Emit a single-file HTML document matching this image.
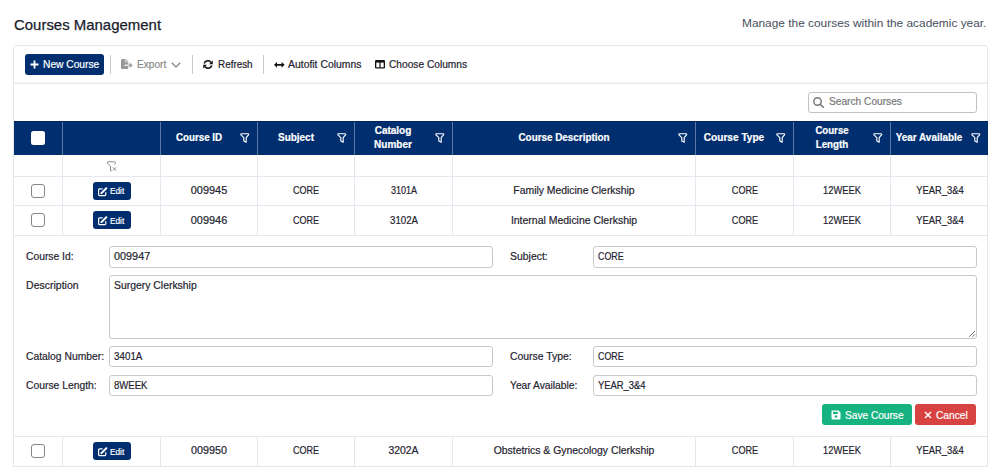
<!DOCTYPE html>
<html><head><meta charset="utf-8">
<style>
*{box-sizing:border-box;margin:0;padding:0}
html,body{width:996px;height:467px;overflow:hidden;background:#fff}
body{position:relative;font-family:"Liberation Sans",sans-serif;color:#1f2430}
.a{-webkit-text-stroke:0.2px currentColor}
.a{position:absolute;white-space:nowrap}
#card{left:13px;top:45px;width:975px;height:440px;border:1px solid #e3e7ee;border-radius:3px}
.btnp{background:#002e6f;color:#fff;border-radius:3px}
.sep{width:1px;height:19px;background:#c9cbd0;top:55px}
#search{left:808px;top:92px;width:169px;height:21px;border:1px solid #c0c2c6;border-radius:3px}
#hdr{left:14px;top:121px;width:974px;height:34px;background:#002e6f;border-top:1px solid #00205f}
.vl{width:1px;background:#e3e8f0}
.hvl{width:1px;background:#5c77a3}
.hl{height:1px;background:#e3e8f0}
.cb{width:14px;height:14px;border:1.6px solid #868686;border-radius:3px;background:#fff}
.edit{width:38px;height:18px;background:#002e6f;border-radius:3px}
.inp{border:1px solid #c9c9c9;border-radius:3px}
</style></head><body>
<div class="a" style="top:15.87px;font-size:14.8px;line-height:18px;color:#181c2b;left:13.80px;transform:scaleX(1.010);transform-origin:left;-webkit-text-stroke:0.25px #181c2b">Courses Management</div>
<div class="a" style="top:16.08px;font-size:11.3px;line-height:14px;color:#4d5462;left:741.80px;transform:scaleX(1.052);transform-origin:left;-webkit-text-stroke:0.05px #4d5462">Manage the courses within the academic year.</div>
<div id="card" class="a"></div>
<div class="a" style="left:14px;top:82px;width:973px;height:1px;background:#f1f3f7"></div>
<div class="a" style="left:14px;top:83px;width:973px;height:1px;background:#e5e9f0"></div>
<div class="a btnp" style="left:25px;top:54px;width:79px;height:21px"></div>
<svg class="a" style="left:30px;top:60px" width="9" height="9" viewBox="0 0 9 9"><path d="M4.5 0.5V8.5M0.5 4.5H8.5" stroke="#fff" stroke-width="1.8"/></svg>
<div class="a" style="top:59.13px;font-size:10.3px;line-height:12px;color:#fff;left:43.00px;transform:scaleX(0.993);transform-origin:left">New Course</div>
<div class="a sep" style="left:110px"></div>
<svg class="a" style="left:121px;top:59px" width="12" height="10" viewBox="0 0 12 10"><path d="M1 0H4.6L7.3 2.7V9.1Q7.3 10 6.4 10H1Q0 10 0 9.1V0.9Q0 0 1 0Z" fill="#999"/><path d="M4.3 0.6V2.2Q4.3 3 5.1 3H6.8" stroke="#fff" stroke-width="0.7" fill="none"/><rect x="3.6" y="5.6" width="4.2" height="1.2" fill="#fff"/><rect x="7.4" y="5.6" width="1.8" height="1.2" fill="#999"/><path d="M8.7 3.4L11.6 6.2L8.7 9Z" fill="#999"/></svg>
<div class="a" style="top:59.13px;font-size:10.3px;line-height:12px;color:#8a8a8a;left:136.60px;transform:scaleX(0.981);transform-origin:left">Export</div>
<svg class="a" style="left:171px;top:61.6px" width="10" height="6" viewBox="0 0 10 6"><path d="M0.8 0.8L5 5L9.2 0.8" stroke="#8a8a8a" stroke-width="1.35" fill="none"/></svg>
<div class="a sep" style="left:192px"></div>
<svg class="a" style="left:203px;top:59.8px" width="10" height="9" viewBox="0 0 10 9"><path d="M1.2 3.4A3.9 3.9 0 0 1 7.9 2.2" stroke="#111" stroke-width="1.6" fill="none"/><path d="M9.8 0.4V4.2H6Z" fill="#111"/><path d="M8.8 5.6A3.9 3.9 0 0 1 2.1 6.8" stroke="#111" stroke-width="1.6" fill="none"/><path d="M0.2 8.6V4.8H4Z" fill="#111"/></svg>
<div class="a" style="top:59.13px;font-size:10.3px;line-height:12px;color:#1f2430;left:217.60px;transform:scaleX(0.960);transform-origin:left">Refresh</div>
<div class="a sep" style="left:263px"></div>
<svg class="a" style="left:274px;top:61.7px" width="11" height="6" viewBox="0 0 11 6"><rect x="2.4" y="1.95" width="5.8" height="1.8" fill="#111"/><path d="M0 2.85L3 0V5.7ZM10.6 2.85L7.6 0V5.7Z" fill="#111"/></svg>
<div class="a" style="top:59.13px;font-size:10.3px;line-height:12px;color:#1f2430;left:288.40px;transform:scaleX(1.011);transform-origin:left">Autofit Columns</div>
<svg class="a" style="left:375px;top:59.8px" width="10" height="9" viewBox="0 0 10 9"><rect x="0" y="0" width="10" height="8.6" rx="1.3" fill="#111"/><rect x="1.3" y="2.6" width="3.1" height="4.7" fill="#fff"/><rect x="5.6" y="2.6" width="3.1" height="4.7" fill="#fff"/></svg>
<div class="a" style="top:59.13px;font-size:10.3px;line-height:12px;color:#1f2430;left:389.10px;transform:scaleX(0.989);transform-origin:left">Choose Columns</div>
<div id="search" class="a"></div>
<svg class="a" style="left:813px;top:96.8px" width="11" height="11" viewBox="0 0 11 11"><circle cx="4.5" cy="4.5" r="3.7" stroke="#777" stroke-width="1.45" fill="none"/><path d="M7.2 7.3L10.3 10.3" stroke="#777" stroke-width="1.6" stroke-linecap="round"/></svg>
<div class="a" style="top:96.43px;font-size:10.3px;line-height:12px;color:#777;left:829.00px;transform:scaleX(0.988);transform-origin:left">Search Courses</div>
<div id="hdr" class="a"></div>
<div class="a hvl" style="left:62px;top:122px;height:33px"></div>
<div class="a hvl" style="left:160px;top:122px;height:33px"></div>
<div class="a hvl" style="left:257px;top:122px;height:33px"></div>
<div class="a hvl" style="left:354px;top:122px;height:33px"></div>
<div class="a hvl" style="left:452px;top:122px;height:33px"></div>
<div class="a hvl" style="left:695px;top:122px;height:33px"></div>
<div class="a hvl" style="left:793px;top:122px;height:33px"></div>
<div class="a hvl" style="left:890px;top:122px;height:33px"></div>
<div class="a" style="top:131.53px;font-size:10px;line-height:12px;color:#fff;font-weight:bold;left:-1.50px;width:400px;text-align:center;transform:scaleX(0.978);transform-origin:center">Course ID</div>
<svg class="a" style="left:240.1px;top:133px" width="10" height="10" viewBox="0 0 10 10"><path d="M1.5 0.7H7.9Q9.2 0.7 8.5 1.9L6.2 4.6V9.2L3.8 8V4.6L1 1.9Q0.3 0.7 1.5 0.7Z" stroke="#fff" stroke-width="1.15" fill="none" stroke-linejoin="round"/></svg>
<div class="a" style="top:131.53px;font-size:10px;line-height:12px;color:#fff;font-weight:bold;left:95.50px;width:400px;text-align:center;transform:scaleX(0.994);transform-origin:center">Subject</div>
<svg class="a" style="left:337.1px;top:133px" width="10" height="10" viewBox="0 0 10 10"><path d="M1.5 0.7H7.9Q9.2 0.7 8.5 1.9L6.2 4.6V9.2L3.8 8V4.6L1 1.9Q0.3 0.7 1.5 0.7Z" stroke="#fff" stroke-width="1.15" fill="none" stroke-linejoin="round"/></svg>
<div class="a" style="top:125.03px;font-size:10px;line-height:12px;color:#fff;font-weight:bold;left:193.00px;width:400px;text-align:center">Catalog</div>
<div class="a" style="top:138.53px;font-size:10px;line-height:12px;color:#fff;font-weight:bold;left:193.00px;width:400px;text-align:center">Number</div>
<svg class="a" style="left:435.1px;top:133px" width="10" height="10" viewBox="0 0 10 10"><path d="M1.5 0.7H7.9Q9.2 0.7 8.5 1.9L6.2 4.6V9.2L3.8 8V4.6L1 1.9Q0.3 0.7 1.5 0.7Z" stroke="#fff" stroke-width="1.15" fill="none" stroke-linejoin="round"/></svg>
<div class="a" style="top:131.53px;font-size:10px;line-height:12px;color:#fff;font-weight:bold;left:363.50px;width:400px;text-align:center;transform:scaleX(0.987);transform-origin:center">Course Description</div>
<svg class="a" style="left:678.1px;top:133px" width="10" height="10" viewBox="0 0 10 10"><path d="M1.5 0.7H7.9Q9.2 0.7 8.5 1.9L6.2 4.6V9.2L3.8 8V4.6L1 1.9Q0.3 0.7 1.5 0.7Z" stroke="#fff" stroke-width="1.15" fill="none" stroke-linejoin="round"/></svg>
<div class="a" style="top:131.53px;font-size:10px;line-height:12px;color:#fff;font-weight:bold;left:534.00px;width:400px;text-align:center;transform:scaleX(1.010);transform-origin:center">Course Type</div>
<svg class="a" style="left:776.1px;top:133px" width="10" height="10" viewBox="0 0 10 10"><path d="M1.5 0.7H7.9Q9.2 0.7 8.5 1.9L6.2 4.6V9.2L3.8 8V4.6L1 1.9Q0.3 0.7 1.5 0.7Z" stroke="#fff" stroke-width="1.15" fill="none" stroke-linejoin="round"/></svg>
<div class="a" style="top:125.03px;font-size:10px;line-height:12px;color:#fff;font-weight:bold;left:631.50px;width:400px;text-align:center;transform:scaleX(0.964);transform-origin:center">Course</div>
<div class="a" style="top:138.53px;font-size:10px;line-height:12px;color:#fff;font-weight:bold;left:631.50px;width:400px;text-align:center;transform:scaleX(0.978);transform-origin:center">Length</div>
<svg class="a" style="left:873.1px;top:133px" width="10" height="10" viewBox="0 0 10 10"><path d="M1.5 0.7H7.9Q9.2 0.7 8.5 1.9L6.2 4.6V9.2L3.8 8V4.6L1 1.9Q0.3 0.7 1.5 0.7Z" stroke="#fff" stroke-width="1.15" fill="none" stroke-linejoin="round"/></svg>
<div class="a" style="top:131.53px;font-size:10px;line-height:12px;color:#fff;font-weight:bold;left:729.00px;width:400px;text-align:center;transform:scaleX(0.991);transform-origin:center">Year Available</div>
<svg class="a" style="left:971.1px;top:133px" width="10" height="10" viewBox="0 0 10 10"><path d="M1.5 0.7H7.9Q9.2 0.7 8.5 1.9L6.2 4.6V9.2L3.8 8V4.6L1 1.9Q0.3 0.7 1.5 0.7Z" stroke="#fff" stroke-width="1.15" fill="none" stroke-linejoin="round"/></svg>
<div class="a" style="left:31px;top:131px;width:14px;height:14px;background:#fff;border-radius:2.5px"></div>
<div class="a vl" style="left:62px;top:155px;height:80px"></div>
<div class="a vl" style="left:62px;top:437px;height:30px"></div>
<div class="a vl" style="left:160px;top:155px;height:80px"></div>
<div class="a vl" style="left:160px;top:437px;height:30px"></div>
<div class="a vl" style="left:257px;top:155px;height:80px"></div>
<div class="a vl" style="left:257px;top:437px;height:30px"></div>
<div class="a vl" style="left:354px;top:155px;height:80px"></div>
<div class="a vl" style="left:354px;top:437px;height:30px"></div>
<div class="a vl" style="left:452px;top:155px;height:80px"></div>
<div class="a vl" style="left:452px;top:437px;height:30px"></div>
<div class="a vl" style="left:695px;top:155px;height:80px"></div>
<div class="a vl" style="left:695px;top:437px;height:30px"></div>
<div class="a vl" style="left:793px;top:155px;height:80px"></div>
<div class="a vl" style="left:793px;top:437px;height:30px"></div>
<div class="a vl" style="left:890px;top:155px;height:80px"></div>
<div class="a vl" style="left:890px;top:437px;height:30px"></div>
<div class="a hl" style="left:14px;top:176px;width:973px"></div>
<div class="a hl" style="left:14px;top:205px;width:973px"></div>
<div class="a hl" style="left:14px;top:235px;width:973px"></div>
<div class="a hl" style="left:14px;top:436px;width:973px"></div>
<div class="a hl" style="left:14px;top:466px;width:973px"></div>
<svg class="a" style="left:103px;top:157.5px" width="18" height="18" viewBox="0 0 18 18"><path d="M11.3 6.7Q12.9 5.5 12.5 4.5Q12.2 3.8 11.2 3.8H5.3Q4 3.8 4.4 4.9Q4.8 5.8 7.5 8.2V12.7H8.7" stroke="#8a8a8a" stroke-width="1" fill="none"/><path d="M10 9.3L13.1 12.5M13.1 9.3L10 12.5" stroke="#8a8a8a" stroke-width="1"/></svg>
<div class="a cb" style="left:31px;top:184px"></div>
<div class="a edit" style="left:93px;top:182px"></div>
<svg class="a" style="left:98.3px;top:186.5px" width="10" height="10" viewBox="0 0 10 10"><path d="M4.6 1.8H1.6Q0.6 1.8 0.6 2.8V7.6Q0.6 8.6 1.6 8.6H6.8Q7.8 8.6 7.8 7.6V5.3" stroke="#fff" stroke-width="1.2" fill="none"/><path d="M3.5 6.1L8.3 1.3" stroke="#fff" stroke-width="2" stroke-linecap="round"/><path d="M2.7 7L3 5.3L4.3 6.6Z" fill="#fff"/></svg>
<div class="a" style="top:185.20px;font-size:9.8px;line-height:12px;color:#fff;left:110.30px;transform:scaleX(0.841);transform-origin:left">Edit</div>
<div class="a" style="top:184.70px;font-size:10.4px;line-height:12px;color:#1f2430;left:9.00px;width:400px;text-align:center;transform:scaleX(1.052);transform-origin:center">009945</div>
<div class="a" style="top:184.70px;font-size:10.4px;line-height:12px;color:#1f2430;left:106.00px;width:400px;text-align:center;transform:scaleX(0.872);transform-origin:center">CORE</div>
<div class="a" style="top:184.70px;font-size:10.4px;line-height:12px;color:#1f2430;left:203.50px;width:400px;text-align:center;transform:scaleX(0.864);transform-origin:center">3101A</div>
<div class="a" style="top:184.70px;font-size:10.4px;line-height:12px;color:#1f2430;left:374.00px;width:400px;text-align:center">Family Medicine Clerkship</div>
<div class="a" style="top:184.70px;font-size:10.4px;line-height:12px;color:#1f2430;left:544.50px;width:400px;text-align:center;transform:scaleX(0.875);transform-origin:center">CORE</div>
<div class="a" style="top:184.70px;font-size:10.4px;line-height:12px;color:#1f2430;left:642.00px;width:400px;text-align:center;transform:scaleX(0.898);transform-origin:center">12WEEK</div>
<div class="a" style="top:184.70px;font-size:10.4px;line-height:12px;color:#1f2430;left:739.50px;width:400px;text-align:center;transform:scaleX(0.903);transform-origin:center">YEAR_3&amp;4</div>
<div class="a cb" style="left:31px;top:213px"></div>
<div class="a edit" style="left:93px;top:211px"></div>
<svg class="a" style="left:98.3px;top:215.5px" width="10" height="10" viewBox="0 0 10 10"><path d="M4.6 1.8H1.6Q0.6 1.8 0.6 2.8V7.6Q0.6 8.6 1.6 8.6H6.8Q7.8 8.6 7.8 7.6V5.3" stroke="#fff" stroke-width="1.2" fill="none"/><path d="M3.5 6.1L8.3 1.3" stroke="#fff" stroke-width="2" stroke-linecap="round"/><path d="M2.7 7L3 5.3L4.3 6.6Z" fill="#fff"/></svg>
<div class="a" style="top:215.10px;font-size:9.8px;line-height:12px;color:#fff;left:110.30px;transform:scaleX(0.841);transform-origin:left">Edit</div>
<div class="a" style="top:214.60px;font-size:10.4px;line-height:12px;color:#1f2430;left:9.00px;width:400px;text-align:center;transform:scaleX(1.052);transform-origin:center">009946</div>
<div class="a" style="top:214.60px;font-size:10.4px;line-height:12px;color:#1f2430;left:106.00px;width:400px;text-align:center;transform:scaleX(0.872);transform-origin:center">CORE</div>
<div class="a" style="top:214.60px;font-size:10.4px;line-height:12px;color:#1f2430;left:203.50px;width:400px;text-align:center;transform:scaleX(0.931);transform-origin:center">3102A</div>
<div class="a" style="top:214.60px;font-size:10.4px;line-height:12px;color:#1f2430;left:374.00px;width:400px;text-align:center;transform:scaleX(1.007);transform-origin:center">Internal Medicine Clerkship</div>
<div class="a" style="top:214.60px;font-size:10.4px;line-height:12px;color:#1f2430;left:544.50px;width:400px;text-align:center;transform:scaleX(0.875);transform-origin:center">CORE</div>
<div class="a" style="top:214.60px;font-size:10.4px;line-height:12px;color:#1f2430;left:642.00px;width:400px;text-align:center;transform:scaleX(0.898);transform-origin:center">12WEEK</div>
<div class="a" style="top:214.60px;font-size:10.4px;line-height:12px;color:#1f2430;left:739.50px;width:400px;text-align:center;transform:scaleX(0.903);transform-origin:center">YEAR_3&amp;4</div>
<div class="a cb" style="left:31px;top:444px"></div>
<div class="a edit" style="left:93px;top:442px"></div>
<svg class="a" style="left:98.3px;top:446.5px" width="10" height="10" viewBox="0 0 10 10"><path d="M4.6 1.8H1.6Q0.6 1.8 0.6 2.8V7.6Q0.6 8.6 1.6 8.6H6.8Q7.8 8.6 7.8 7.6V5.3" stroke="#fff" stroke-width="1.2" fill="none"/><path d="M3.5 6.1L8.3 1.3" stroke="#fff" stroke-width="2" stroke-linecap="round"/><path d="M2.7 7L3 5.3L4.3 6.6Z" fill="#fff"/></svg>
<div class="a" style="top:445.70px;font-size:9.8px;line-height:12px;color:#fff;left:110.30px;transform:scaleX(0.841);transform-origin:left">Edit</div>
<div class="a" style="top:445.20px;font-size:10.4px;line-height:12px;color:#1f2430;left:9.00px;width:400px;text-align:center;transform:scaleX(1.037);transform-origin:center">009950</div>
<div class="a" style="top:445.20px;font-size:10.4px;line-height:12px;color:#1f2430;left:106.00px;width:400px;text-align:center;transform:scaleX(0.872);transform-origin:center">CORE</div>
<div class="a" style="top:445.20px;font-size:10.4px;line-height:12px;color:#1f2430;left:203.50px;width:400px;text-align:center">3202A</div>
<div class="a" style="top:445.20px;font-size:10.4px;line-height:12px;color:#1f2430;left:374.00px;width:400px;text-align:center">Obstetrics &amp; Gynecology Clerkship</div>
<div class="a" style="top:445.20px;font-size:10.4px;line-height:12px;color:#1f2430;left:544.50px;width:400px;text-align:center;transform:scaleX(0.875);transform-origin:center">CORE</div>
<div class="a" style="top:445.20px;font-size:10.4px;line-height:12px;color:#1f2430;left:642.00px;width:400px;text-align:center;transform:scaleX(0.898);transform-origin:center">12WEEK</div>
<div class="a" style="top:445.20px;font-size:10.4px;line-height:12px;color:#1f2430;left:739.50px;width:400px;text-align:center;transform:scaleX(0.903);transform-origin:center">YEAR_3&amp;4</div>
<div class="a" style="top:250.26px;font-size:10.5px;line-height:13px;color:#1f2430;left:25.70px;transform:scaleX(0.981);transform-origin:left">Course Id:</div>
<div class="a inp" style="left:109px;top:246px;width:384px;height:22px"></div>
<div class="a" style="top:250.06px;font-size:10.5px;line-height:13px;color:#1f2430;left:114.20px;transform:scaleX(1.033);transform-origin:left">009947</div>
<div class="a" style="top:250.26px;font-size:10.5px;line-height:13px;color:#1f2430;left:509.80px;transform:scaleX(0.994);transform-origin:left">Subject:</div>
<div class="a inp" style="left:593px;top:246px;width:384px;height:22px"></div>
<div class="a" style="top:250.06px;font-size:10.5px;line-height:13px;color:#1f2430;left:598.20px;transform:scaleX(0.847);transform-origin:left">CORE</div>
<div class="a" style="top:278.86px;font-size:10.5px;line-height:13px;color:#1f2430;left:26.10px">Description</div>
<div class="a inp" style="left:109px;top:275px;width:868px;height:64px"></div>
<div class="a" style="top:279.06px;font-size:10.5px;line-height:13px;color:#1f2430;left:114.20px;transform:scaleX(0.991);transform-origin:left">Surgery Clerkship</div>
<svg class="a" style="left:968px;top:330px" width="8" height="8" viewBox="0 0 8 8"><path d="M7 1L1.2 6.8M7 4.2L4.3 6.9" stroke="#666" stroke-width="0.9"/></svg>
<div class="a" style="top:350.46px;font-size:10.5px;line-height:13px;color:#1f2430;left:25.80px;transform:scaleX(0.983);transform-origin:left">Catalog Number:</div>
<div class="a inp" style="left:109px;top:346px;width:384px;height:21px"></div>
<div class="a" style="top:350.36px;font-size:10.5px;line-height:13px;color:#1f2430;left:114.20px;transform:scaleX(0.935);transform-origin:left">3401A</div>
<div class="a" style="top:350.46px;font-size:10.5px;line-height:13px;color:#1f2430;left:510.00px;transform:scaleX(0.991);transform-origin:left">Course Type:</div>
<div class="a inp" style="left:593px;top:346px;width:384px;height:21px"></div>
<div class="a" style="top:350.36px;font-size:10.5px;line-height:13px;color:#1f2430;left:598.20px;transform:scaleX(0.847);transform-origin:left">CORE</div>
<div class="a" style="top:378.86px;font-size:10.5px;line-height:13px;color:#1f2430;left:25.80px;transform:scaleX(0.985);transform-origin:left">Course Length:</div>
<div class="a inp" style="left:109px;top:375px;width:384px;height:21px"></div>
<div class="a" style="top:379.06px;font-size:10.5px;line-height:13px;color:#1f2430;left:114.20px;transform:scaleX(0.909);transform-origin:left">8WEEK</div>
<div class="a" style="top:378.86px;font-size:10.5px;line-height:13px;color:#1f2430;left:510.00px;transform:scaleX(0.977);transform-origin:left">Year Available:</div>
<div class="a inp" style="left:593px;top:375px;width:384px;height:21px"></div>
<div class="a" style="top:379.06px;font-size:10.5px;line-height:13px;color:#1f2430;left:598.20px;transform:scaleX(0.896);transform-origin:left">YEAR_3&amp;4</div>
<div class="a" style="left:822px;top:404px;width:90px;height:21px;background:#16b380;border-radius:3px"></div>
<svg class="a" style="left:831px;top:410px" width="10" height="10" viewBox="0 0 10 10"><path d="M0.5 1.3a0.8 0.8 0 0 1 0.8-0.8h6.2l2 2v6.2a0.8 0.8 0 0 1-0.8 0.8H1.3a0.8 0.8 0 0 1-0.8-0.8z" fill="#fff"/><rect x="2" y="1.8" width="4.8" height="2.2" fill="#16b380"/><circle cx="5" cy="6.5" r="1.3" fill="#16b380"/></svg>
<div class="a" style="top:408.86px;font-size:10.5px;line-height:13px;color:#fff;left:844.50px;transform:scaleX(0.964);transform-origin:left">Save Course</div>
<div class="a" style="left:915px;top:404px;width:61px;height:21px;background:#d64341;border-radius:3px"></div>
<svg class="a" style="left:924px;top:411px" width="8" height="8" viewBox="0 0 8 8"><path d="M1 1L7 7M7 1L1 7" stroke="#fff" stroke-width="1.5"/></svg>
<div class="a" style="top:408.86px;font-size:10.5px;line-height:13px;color:#fff;left:935.50px;transform:scaleX(0.970);transform-origin:left">Cancel</div>
</body></html>
